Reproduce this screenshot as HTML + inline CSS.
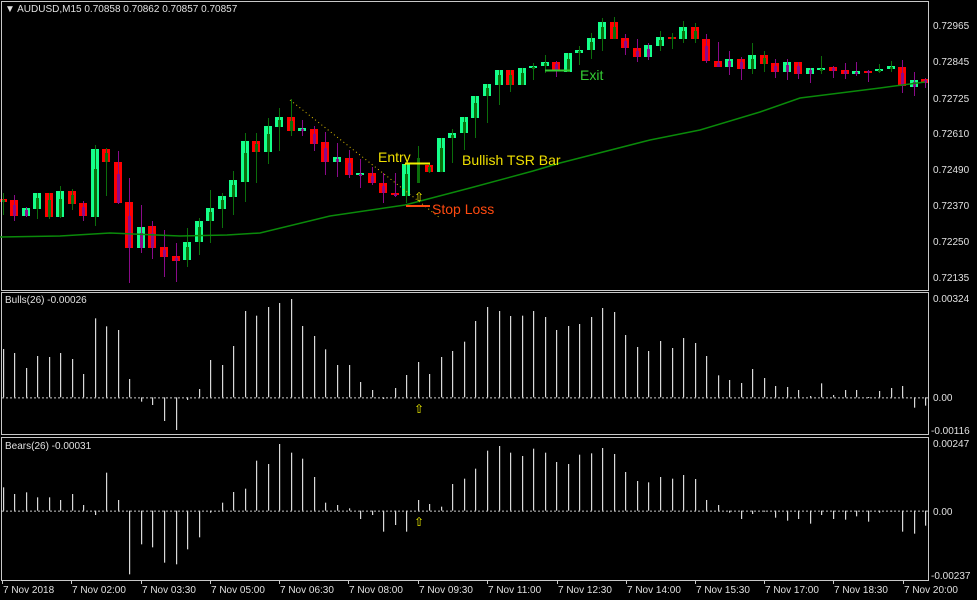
<!DOCTYPE html>
<html><head><meta charset="utf-8"><style>
html,body{margin:0;padding:0;background:#000;width:977px;height:600px;overflow:hidden}
svg{display:block}
text{font-family:"Liberation Sans",sans-serif}
</style></head><body>
<svg id="s" width="977" height="600" xmlns="http://www.w3.org/2000/svg">
<rect width="977" height="600" fill="#000"/>
<g id="c"></g>
<g fill="none" stroke="#c8c8c8" stroke-width="1">
<rect x="1.5" y="1.5" width="927" height="289"/>
<rect x="1.5" y="292.5" width="927" height="142"/>
<rect x="1.5" y="437.5" width="927" height="143"/>
</g>
<polyline fill="none" stroke="#0a8a0a" stroke-width="1.5" points="0,237 60,236 110,233 180,236 227,235 260,233 330,216 405,205 470,188 533,171 560,163 650,140 700,130 760,112 800,98 840,93 880,88 925,82"/>
<line x1="290" y1="100" x2="440" y2="218" stroke="#e0c000" stroke-width="1" stroke-dasharray="1,3"/>
<line x1="405" y1="163.5" x2="430" y2="163.5" stroke="#f0f000" stroke-width="2"/>
<line x1="406" y1="206" x2="430" y2="206" stroke="#ff4a10" stroke-width="2"/>
<line x1="545" y1="70.5" x2="570" y2="70.5" stroke="#33cc33" stroke-width="2"/>
<g font-size="14">
<text x="378" y="162" fill="#f0e000">Entry</text>
<text x="462" y="165" fill="#f0e000">Bullish TSR Bar</text>
<text x="432" y="214" fill="#ff4a10">Stop Loss</text>
<text x="580" y="80" fill="#33cc33">Exit</text>
</g>
<g font-size="12" fill="#f0f000">
<text x="414" y="201">⇧</text>
<text x="414" y="413">⇧</text>
<text x="414" y="526">⇧</text>
</g>
<g font-size="10" fill="#e0e0e0">
<text x="5" y="12">▼ AUDUSD,M15  0.70858 0.70862 0.70857 0.70857</text>
<text x="5" y="303">Bulls(26) -0.00026</text>
<text x="5" y="449">Bears(26) -0.00031</text>
<text x="933" y="29">0.72965</text>
<text x="933" y="65">0.72845</text>
<text x="933" y="102">0.72725</text>
<text x="933" y="137">0.72610</text>
<text x="933" y="173">0.72490</text>
<text x="933" y="209">0.72370</text>
<text x="933" y="245">0.72250</text>
<text x="933" y="281">0.72135</text>
<text x="933" y="302">0.00324</text>
<text x="933" y="401">0.00</text>
<text x="931" y="434">-0.00116</text>
<text x="933" y="447">0.00247</text>
<text x="933" y="515">0.00</text>
<text x="931" y="579">-0.00237</text>
</g>
<g id="t" font-size="10" fill="#e0e0e0"></g>
</svg>
<script>
var NS="http://www.w3.org/2000/svg",g=document.getElementById('c'),tg=document.getElementById('t');
function el(p,n,a){var e=document.createElementNS(NS,n);for(var k in a)e.setAttribute(k,a[k]);p.appendChild(e);return e;}
var X=function(i){return 2.5+11.535*i;};
var C=[[199,202,'r',193,215,'d'],[200,216,'r',195,221,'p'],[208,216,'g',207,217,'p'],[193,209,'g',193,219,'d'],[193,217,'r',193,219,'d'],[191,217,'g',186,218,'d'],[191,204,'r',189,210,'d'],[203,216,'r',201,221,'p'],[149,217,'g',145,226,'d'],[149,162,'r',148,196,'d'],[162,203,'r',151,204,'p'],[202,248,'r',178,283,'p'],[227,248,'g',205,253,'p'],[226,248,'r',221,259,'p'],[247,257,'r',230,277,'p'],[256,261,'r',243,282,'p'],[242,260,'g',228,267,'d'],[221,242,'g',218,255,'d'],[208,221,'g',190,243,'d'],[196,209,'g',193,228,'d'],[180,197,'g',171,215,'d'],[141,182,'g',133,202,'d'],[141,152,'r',133,183,'d'],[126,152,'g',118,164,'d'],[117,127,'g',108,151,'d'],[117,131,'r',99,136,'d'],[128,131,'g',120,136,'p'],[129,144,'r',126,151,'p'],[142,162,'r',132,175,'p'],[157,162,'g',143,177,'p'],[158,175,'r',150,178,'p'],[173,175,'g',159,188,'p'],[173,183,'r',167,185,'p'],[183,193,'r',173,203,'p'],[193,195,'r',173,197,'p'],[164,196,'g',164,203,'d'],[0,0,'',146,183,'d'],[165,172,'r',163,173,'d'],[138,172,'g',138,172,'d'],[133,138,'g',129,163,'d'],[117,133,'g',117,150,'d'],[96,118,'g',96,138,'d'],[84,96,'g',84,123,'d'],[70,85,'g',70,105,'d'],[70,85,'r',70,92,'d'],[68,85,'g',68,85,'d'],[66,68,'g',63,80,'d'],[62,66,'g',55,73,'d'],[62,70,'r',61,77,'p'],[53,72,'g',53,72,'d'],[50,53,'g',46,65,'d'],[38,50,'g',33,59,'d'],[22,39,'g',18,51,'d'],[22,39,'r',17,39,'d'],[38,48,'r',34,55,'p'],[48,57,'r',39,62,'p'],[45,57,'g',43,60,'p'],[37,46,'g',31,51,'d'],[37,38,'r',33,49,'d'],[27,39,'g',21,43,'d'],[27,39,'r',23,43,'d'],[39,61,'r',34,63,'p'],[61,67,'r',42,67,'p'],[59,67,'g',51,75,'p'],[59,69,'r',57,80,'p'],[55,69,'g',43,74,'d'],[55,64,'r',51,72,'d'],[63,72,'r',59,78,'p'],[62,72,'g',59,80,'p'],[62,74,'r',62,79,'p'],[68,74,'g',68,83,'p'],[68,70,'g',56,74,'d'],[67,71,'r',66,78,'p'],[70,74,'r',63,79,'p'],[71,74,'g',62,76,'p'],[71,72,'r',70,82,'p'],[69,71,'g',64,73,'d'],[66,69,'g',61,72,'d'],[67,86,'r',60,93,'p'],[80,87,'g',72,96,'p'],[79,83,'r',78,88,'p']];
var col={g:'#14ff8a',r:'#ff0000',d:'#0b6e0b',p:'#8a0a8a'};
C.forEach(function(c,i){var x=Math.round(X(i));
 if(c[2])el(g,'rect',{x:x-4,y:c[0],width:8,height:Math.max(2,c[1]-c[0]),fill:col[c[2]]});
 el(g,'rect',{x:x,y:c[3],width:1,height:c[4]-c[3],fill:col[c[5]]});
 var bt=c[2]?c[0]+Math.round((c[1]-c[0])*0.3):c[3]+12,bb=c[2]?c[1]:c[4];
 el(g,'rect',{x:x-1,y:bt,width:3,height:Math.max(2,bb-bt),fill:col[c[5]]});
});
var B=[192,204,249,213,216,204,222,267,100,124,135,282,350,360,408,435,345,312,225,240,183,78,92,66,54,42,123,153,193,240,240,291,315,342,309,270,231,267,216,198,170,108,66,78,93,92,78,96,135,123,117,96,69,81,150,186,198,168,189,159,174,213,271,285,294,252,279,303,306,315,333,295,330,315,315,336,318,309,303,368,362];
var R=[607,627,622,637,637,645,627,660,690,563,645,868,778,787,833,838,793,757,683,653,621,611,527,537,477,503,521,576,653,660,670,702,690,740,720,740,645,657,665,597,581,551,497,483,503,513,491,503,531,537,509,505,489,507,561,588,592,576,581,570,582,645,660,683,702,687,677,698,707,702,716,690,702,704,694,710,683,680,740,746,722];
function hist(arr,z){var zy=285+z/3;el(g,'line',{x1:2,y1:zy+0.5,x2:928,y2:zy+0.5,stroke:'#c8c8c8','stroke-dasharray':'2,2'});
 arr.forEach(function(v,i){var y=285+v/3,x=Math.round(X(i));var a=Math.min(y,zy),b=Math.max(y,zy);
 el(g,'rect',{x:x,y:a,width:1.2,height:Math.max(1,b-a),fill:'#d8d8d8'});});}
hist(B,337);hist(R,677);
var tk=[2,71,141,210,279,348,418,487,557,626,695,764,833,903],lb=['7 Nov 2018','7 Nov 02:00','7 Nov 03:30','7 Nov 05:00','7 Nov 06:30','7 Nov 08:00','7 Nov 09:30','7 Nov 11:00','7 Nov 12:30','7 Nov 14:00','7 Nov 15:30','7 Nov 17:00','7 Nov 18:30','7 Nov 20:00'];
tk.forEach(function(x,i){el(tg,'rect',{x:x,y:581,width:1,height:3,fill:'#c8c8c8'});var t=el(tg,'text',{x:x+1,y:593});t.textContent=lb[i];});
</script>
</body></html>
